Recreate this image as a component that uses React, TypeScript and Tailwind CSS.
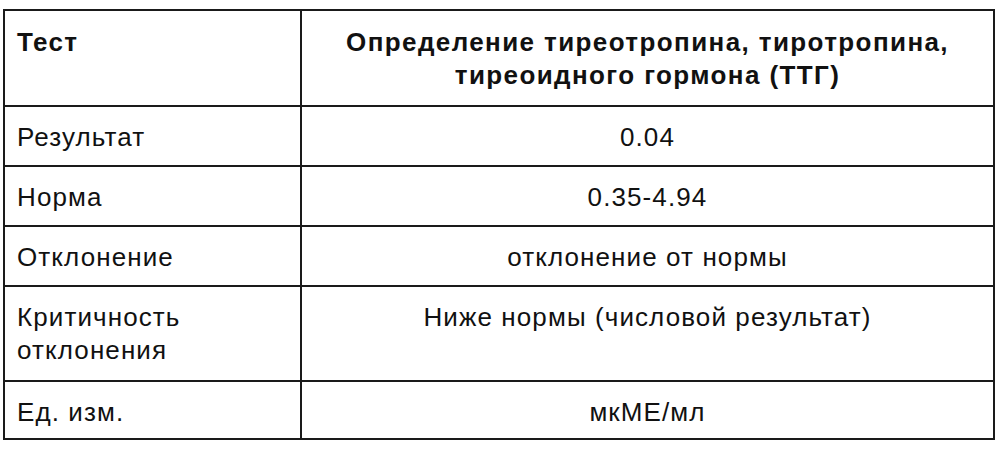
import React from 'react';

type Row = { label: string; value: string; h: string };

const rows: Row[] = [
    { label: 'Результат', value: '0.04', h: 'h-[60px]' },
    { label: 'Норма', value: '0.35-4.94', h: 'h-[60px]' },
    { label: 'Отклонение', value: 'отклонение от нормы', h: 'h-[60px]' },
    { label: 'Критичность отклонения', value: 'Ниже нормы (числовой результат)', h: 'h-[95px]' },
    { label: 'Ед. изм.', value: 'мкМЕ/мл', h: 'h-[58px]' },
];

export default function App() {
    return (
        <div className="w-[1000px] h-[454px] bg-white pt-[9px] pl-[3px] font-['Liberation_Sans',Arial,sans-serif] text-[26px] leading-[33px] tracking-[1.1px] text-[#111]">
            <table className="w-[992px] table-fixed border-collapse">
                <colgroup>
                    <col className="w-[297px]" />
                    <col />
                </colgroup>
                <thead>
                    {/* Header */}
                    <tr className="h-[96px]">
                        <th className="border-2 border-[#1a1a1a] align-top text-left font-bold tracking-[1.4px] pl-3 pr-2 pt-[15px]">Тест</th>
                        <th className="border-2 border-[#1a1a1a] align-top text-center font-bold tracking-[1.4px] px-2 pt-[15px]">
                            Определение тиреотропина, тиротропина,
                            <br />
                            тиреоидного гормона (ТТГ)
                        </th>
                    </tr>
                </thead>
                <tbody>
                    {rows.map((r) => (
                        <tr key={r.label} className={r.h}>
                            <td className="border-2 border-[#1a1a1a] align-top text-left pl-3 pr-2 pt-[14px]">
                                {r.label === 'Критичность отклонения' ? (
                                    <>Критичность<br />отклонения</>
                                ) : r.label}
                            </td>
                            <td className="border-2 border-[#1a1a1a] align-top text-center px-2 pt-[14px]">{r.value}</td>
                        </tr>
                    ))}
                </tbody>
            </table>
        </div>
    );
}
